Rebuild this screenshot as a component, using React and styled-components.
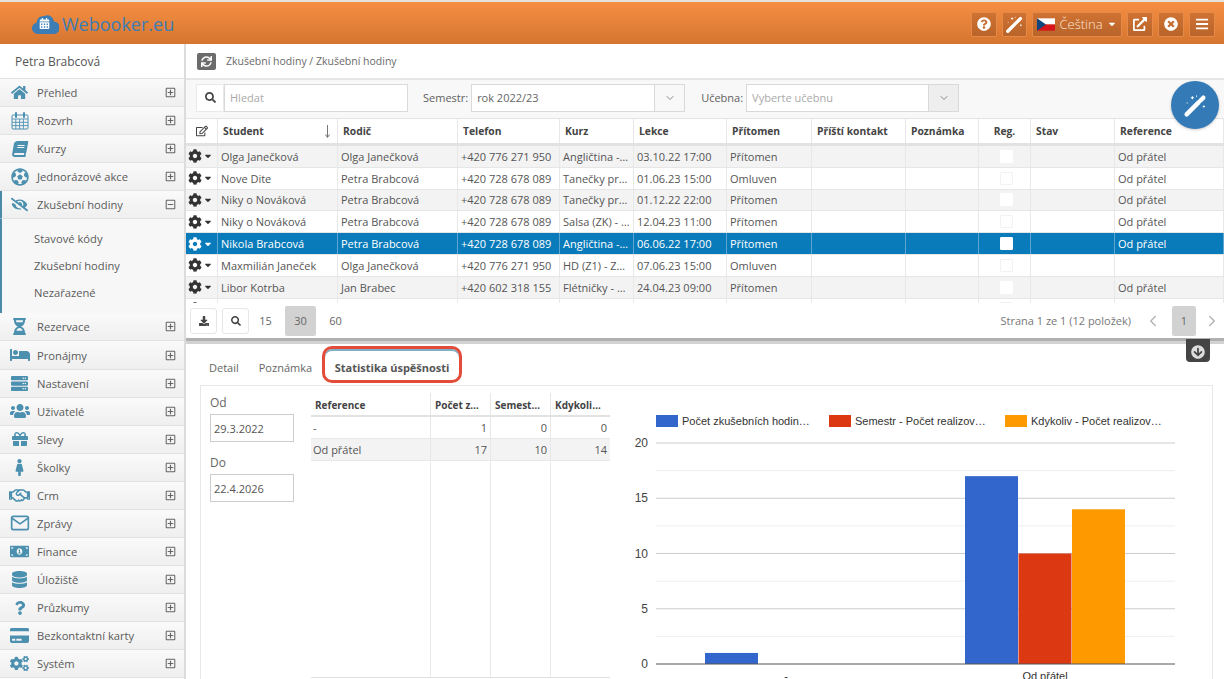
import styled, { createGlobalStyle } from "styled-components";
import {
  FaHome,
  FaBook,
  FaFutbol,
  FaEyeSlash,
  FaHourglassHalf,
  FaBed,
  FaServer,
  FaUsers,
  FaGift,
  FaFemale,
  FaRegHandshake,
  FaMoneyBillAlt,
  FaDatabase,
  FaQuestion,
  FaCreditCard,
  FaCogs,
  FaRegPlusSquare,
  FaRegMinusSquare,
  FaSearch,
  FaCog,
  FaCaretDown,
  FaQuestionCircle,
  FaExternalLinkAlt,
  FaTimesCircle,
  FaBars,
  FaSync,
  FaRegEdit,
  FaDownload,
  FaArrowCircleDown,
  FaCalendarAlt,
} from "react-icons/fa";
import { FiChevronDown, FiChevronLeft, FiChevronRight, FiMail } from "react-icons/fi";

const GlobalStyle = createGlobalStyle`
  html, body { margin: 0; padding: 0; background: #fff; }
  body { font-family: "Open Sans", "Liberation Sans", sans-serif; font-size: 11px; color: #555; }
  * { box-sizing: border-box; }
`;

const Page = styled.div`
  position: relative;
  width: 1224px;
  height: 679px;
  overflow: hidden;
`;

const TopBar = styled.header`
  height: 44px;
  display: flex;
  align-items: center;
  justify-content: space-between;
  padding: 2px 9px 0 32px;
  border-top: 2px solid #e6e2de;
  background: linear-gradient(#f68e44, #d5752f);
`;

const Logo = styled.div`
  position: relative;
  display: flex;
  align-items: center;
  gap: 3px;
  color: #3c7db5;
  font-size: 18px;
`;

const LogoCal = styled.span`
  position: absolute;
  left: 7px;
  top: 6px;
  display: flex;
  color: #fff;
  svg { font-size: 11px; }
`;

const TopActions = styled.div`
  display: flex;
  gap: 5px;
`;

const TopButton = styled.button`
  height: 25px;
  width: ${(props) => props.$width || 26}px;
  display: flex;
  align-items: center;
  justify-content: center;
  padding: 0;
  border: 1px solid #e58a47;
  border-radius: 2px;
  background: linear-gradient(#cf7232, #b9642a);
  color: #fff;
  font: inherit;
  font-size: 13px;
  svg { font-size: 14px; }
`;

const LangText = styled.span`
  margin: 0 4px 0 4px;
  font-weight: 300;
  color: #fbe6d8;
`;

const Caret = styled(FaCaretDown)`
  && { font-size: 10px; }
`;

const Body = styled.div`
  display: flex;
  height: 635px;
`;

const Sidebar = styled.aside`
  width: 186px;
  flex: none;
  border-right: 2px solid #dcdcdc;
`;

const UserName = styled.div`
  height: 35px;
  display: flex;
  align-items: center;
  padding-left: 15px;
  font-size: 12px;
  color: #555;
  background: #fff;
  border-bottom: 1px solid #e2e2e2;
`;

const MenuItem = styled.div`
  height: 28.08px;
  display: flex;
  align-items: center;
  font-size: 11.2px;
  color: #5b5b5b;
  background: linear-gradient(#fafafa, #efefef);
  border-bottom: 1px solid #e2e2e2;
  border-left: 2px solid ${(props) => (props.$active ? "#4b8ba8" : "transparent")};
  padding-left: ${(props) => (props.$active ? 0 : 2)}px;
  margin-left: ${(props) => (props.$active ? 0 : -2)}px;
`;

const MenuIcon = styled.span`
  width: 35px;
  flex: none;
  display: flex;
  justify-content: center;
  color: #4c90b0;
  font-size: ${(props) => props.$size || 17}px;
`;

const TiltedBook = styled(FaBook)`
  transform: skewX(-10deg);
`;

const MenuLabel = styled.span`
  flex: 1;
`;

const MenuToggle = styled.span`
  display: flex;
  margin-right: 8px;
  font-size: 11px;
  color: #666;
`;

const SubMenu = styled.div`
  height: 94px;
  padding: 6px 0 0 32px;
  background: #f7f7f7;
  border-left: 2px solid #4b8ba8;
  font-size: 11.2px;
  color: #5b5b5b;
`;

const SubItem = styled.div`
  height: 27px;
  line-height: 27px;
`;

const Main = styled.main`
  flex: 1;
  min-width: 0;
`;

const Crumbs = styled.div`
  height: 36px;
  display: flex;
  align-items: center;
  gap: 10px;
  padding-left: 11px;
  background: #fff;
  border-bottom: 2px solid #e5e5e5;
  color: #6a6a6a;
  font-size: 10.5px;
`;

const RefreshBox = styled.span`
  width: 19px;
  height: 17px;
  display: flex;
  align-items: center;
  justify-content: center;
  border-radius: 2px;
  background: #6b6b6b;
  color: #fff;
  font-size: 11px;
`;

const Filters = styled.div`
  height: 39px;
  display: flex;
  align-items: center;
  padding: 0 0 3px 10px;
  background: #f8f8f8;
  border-bottom: 1px solid #e4e4e4;
`;

const SearchButton = styled.span`
  width: 28px;
  height: 28px;
  display: flex;
  align-items: center;
  justify-content: center;
  background: #fff;
  border: 1px solid #eaeaea;
  color: #444;
  font-size: 11px;
`;

const Field = styled.div`
  width: ${(props) => props.$width}px;
  height: 28px;
  display: flex;
  align-items: center;
  padding-left: ${(props) => props.$pad || 5}px;
  background: #fff;
  border: 1px solid #d9d9d9;
  font-size: 11px;
  color: ${(props) => (props.$muted ? "#aaa" : "#666")};
`;

const FieldText = styled.span`
  flex: 1;
`;

const FieldArrow = styled.span`
  width: 30px;
  height: 100%;
  display: flex;
  align-items: center;
  justify-content: center;
  border-left: 1px solid #d9d9d9;
  background: ${(props) => (props.$disabled ? "#eee" : "#f8f8f8")};
  color: #888;
  font-size: 12px;
`;

const FilterLabel = styled.span`
  margin: 0 3px 0 ${(props) => props.$left}px;
  font-size: 11px;
  color: #5f5f5f;
`;

const columns = "32px 120px 120px 102px 74px 93px 85px 94px 73px 52px 84px 109px";

const Table = styled.div`
  height: 184px;
  overflow: hidden;
  background: #fff;
`;

const HeadRow = styled.div`
  display: grid;
  grid-template-columns: ${columns};
  height: 27px;
  border-bottom: 3px solid #e2e2e2;
`;

const HeadCell = styled.div`
  display: flex;
  align-items: center;
  justify-content: ${(props) => (props.$center ? "center" : "space-between")};
  padding: 0 5px;
  border-right: 1px solid #e8e8e8;
  font-size: 10.3px;
  font-weight: 700;
  color: #444;
`;

const SortArrow = styled.svg`
  margin-right: 1px;
`;

const Row = styled.div`
  display: grid;
  grid-template-columns: ${columns};
  height: 21.8px;
  font-size: 11px;
  border-bottom: 1px solid #e6e6e6;
  color: ${(props) => (props.$selected ? "#fff" : "#555")};
  background: ${(props) =>
    props.$selected ? "#0a7bba" : props.$odd ? "#f3f3f3" : "#fff"};
`;

const Cell = styled.div`
  display: flex;
  align-items: center;
  justify-content: ${(props) => (props.$center ? "center" : "flex-start")};
  padding-left: 3px;
  white-space: nowrap;
  overflow: hidden;
  border-right: 1px solid ${(props) => (props.$selected ? "#5ea6d0" : "#e8e8e8")};
`;

const GearCell = styled(Cell)`
  padding-left: 2px;
  gap: 1px;
  color: ${(props) => (props.$selected ? "#fff" : "#333")};
  svg:first-child { font-size: 14px; }
  svg:last-child { font-size: 10px; }
`;

const CheckBox = styled.span`
  width: 13px;
  height: 13px;
  background: #fff;
  border-radius: 1px;
  border: 1px solid ${(props) => (props.$odd || props.$selected ? "#fff" : "#f2f2f2")};
`;

const Pager = styled.div`
  height: 35px;
  display: flex;
  align-items: center;
  padding: 0 4px;
  background: #fff;
`;

const PagerButton = styled.span`
  width: 27px;
  height: 26px;
  margin-right: ${(props) => props.$gap}px;
  display: flex;
  align-items: center;
  justify-content: center;
  border: 1px solid #e6e6e6;
  border-radius: 3px;
  color: #444;
  font-size: 10px;
`;

const PageSize = styled.span`
  width: ${(props) => props.$width || 31}px;
  height: 30px;
  display: flex;
  align-items: center;
  justify-content: center;
  margin-right: ${(props) => props.$gap || 0}px;
  border-radius: 2px;
  font-size: 11px;
  color: #666;
  background: ${(props) => (props.$active ? "#d2d2d2" : "transparent")};
`;

const PagerInfo = styled.span`
  margin-left: auto;
  font-size: 11px;
  color: #777;
`;

const PagerArrow = styled.span`
  display: flex;
  margin: ${(props) => props.$margin};
  color: #b5b5b5;
  font-size: 18px;
`;

const Splitter = styled.div`
  position: relative;
  height: 6px;
  background: linear-gradient(#b0b0b0 0 3px, #d2d2d2 3px);
`;

const SplitHandle = styled.span`
  position: absolute;
  left: 1000px;
  top: 1px;
  width: 24px;
  height: 23px;
  display: flex;
  align-items: center;
  justify-content: center;
  padding-top: 3px;
  border-radius: 0 0 4px 4px;
  background: #444;
  color: #ddd;
  font-size: 14px;
  z-index: 2;
`;

const Tabs = styled.div`
  height: 41px;
  display: flex;
  align-items: center;
  padding: 3px 0 0 23px;
`;

const Tab = styled.span`
  margin: 3px ${(props) => props.$gap}px 0 0;
  font-size: 11px;
  color: #666;
`;

const ActiveTab = styled.span`
  height: 37px;
  width: 140px;
  margin-top: -3px;
  padding-top: 6px;
  display: flex;
  align-items: center;
  justify-content: center;
  border: 3px solid #e34c3a;
  border-radius: 10px;
  box-shadow: inset 0 2px 0 #7fb0c8;
  font-size: 11px;
  font-weight: 700;
  color: #555;
`;

const Panel = styled.div`
  display: flex;
  height: 294px;
  margin: 0 11px 0 14px;
  border: 1px solid #e8e8e8;
  border-bottom: none;
`;

const DateColumn = styled.div`
  width: 110px;
  flex: none;
  padding: 7px 0 0 9px;
`;

const DateLabel = styled.div`
  font-size: 12px;
  color: #666;
  height: 21px;
  line-height: 20px;
`;

const DateInput = styled.div`
  width: 84px;
  height: 28px;
  margin-bottom: 11px;
  display: flex;
  align-items: center;
  padding-left: 3px;
  border: 1px solid #ccc;
  font-size: 11px;
  color: #555;
`;

const Stats = styled.div`
  width: 299px;
  flex: none;
  margin-top: 7px;
  height: 285px;
  border-bottom: 1px solid #e0e0e0;
  display: grid;
  grid-template-columns: 120px 60px 60px 59px;
  grid-template-rows: 24px 22px 22px 1fr;
`;

const StatsHead = styled.div`
  display: flex;
  align-items: center;
  padding: 2px 0 0 4px;
  border-bottom: 2px solid #e2e2e2;
  border-right: ${(props) => (props.$last ? "none" : "1px solid #e8e8e8")};
  font-size: 10px;
  font-weight: 700;
  color: #444;
`;

const StatsCell = styled.div`
  display: flex;
  align-items: center;
  justify-content: ${(props) => (props.$num ? "flex-end" : "flex-start")};
  padding: 0 3px 0 2px;
  font-size: 11px;
  color: #555;
  background: ${(props) => (props.$odd ? "#f3f3f3" : "#fff")};
  border-bottom: 1px solid #e8e8e8;
  border-right: ${(props) => (props.$last ? "none" : "1px solid #e8e8e8")};
`;

const StatsFill = styled.div`
  border-right: ${(props) => (props.$last ? "none" : "1px solid #e8e8e8")};
`;

const Chart = styled.svg`
  flex: none;
  margin: 3px 0 0 10px;
  font-family: "Liberation Sans", Arial, sans-serif;
`;

const Fab = styled.span`
  position: absolute;
  left: 1171px;
  top: 81px;
  width: 48px;
  height: 48px;
  display: flex;
  align-items: center;
  justify-content: center;
  border-radius: 50%;
  background: #337ab7;
  color: #fff;
  box-shadow: 0 1px 3px rgba(0, 0, 0, 0.2);
  z-index: 3;
`;

function CalendarIcon() {
  return (
    <svg width="18" height="18" viewBox="0 0 18 18" fill="none" stroke="currentColor">
      <rect x="1" y="3" width="16" height="14" rx="1" />
      <path d="M1 7h16M1 10.3h16M1 13.6h16M4.8 7v10M8.6 7v10M12.4 7v10" strokeWidth="0.9" />
      <path d="M5 1v4M13 1v4" strokeWidth="2" strokeLinecap="round" />
    </svg>
  );
}

function WandIcon({ size }) {
  return (
    <svg width={size} height={size} viewBox="0 0 24 24" fill="none" stroke="currentColor">
      <path d="M3.5 20.5L15 9" strokeWidth="4.2" strokeLinecap="round" />
      <path d="M16.8 7.2l2.7-2.7" strokeWidth="4.2" strokeLinecap="round" />
      <path d="M9 3v3M7.5 4.5h3M20 12v2M19 13h2M13 2.5v1M4 9v1" strokeWidth="1" />
    </svg>
  );
}

const menuTop = [
  [FaHome, "Přehled", 17],
  [CalendarIcon, "Rozvrh", 18],
  [TiltedBook, "Kurzy", 16],
  [FaFutbol, "Jednorázové akce", 18],
];

const menuBottom = [
  [FaHourglassHalf, "Rezervace", 17],
  [FaBed, "Pronájmy", 20],
  [FaServer, "Nastavení", 17],
  [FaUsers, "Uživatelé", 20],
  [FaGift, "Slevy", 16],
  [FaFemale, "Školky", 17],
  [FaRegHandshake, "Crm", 21],
  [FiMail, "Zprávy", 20],
  [FaMoneyBillAlt, "Finance", 19],
  [FaDatabase, "Úložiště", 17],
  [FaQuestion, "Průzkumy", 14],
  [FaCreditCard, "Bezkontaktní karty", 19],
  [FaCogs, "Systém", 19],
];

const rows = [
  ["Olga Janečková", "Olga Janečková", "+420 776 271 950", "Angličtina -…", "03.10.22 17:00", "Přítomen", "Od přátel"],
  ["Nove Dite", "Petra Brabcová", "+420 728 678 089", "Tanečky pr…", "01.06.23 15:00", "Omluven", "Od přátel"],
  ["Niky o Nováková", "Petra Brabcová", "+420 728 678 089", "Tanečky pr…", "01.12.22 22:00", "Přítomen", "Od přátel"],
  ["Niky o Nováková", "Petra Brabcová", "+420 728 678 089", "Salsa (ZK) - …", "12.04.23 11:00", "Přítomen", "Od přátel"],
  ["Nikola Brabcová", "Petra Brabcová", "+420 728 678 089", "Angličtina -…", "06.06.22 17:00", "Přítomen", "Od přátel"],
  ["Maxmilián Janeček", "Olga Janečková", "+420 776 271 950", "HD (Z1) - Z…", "07.06.23 15:00", "Omluven", ""],
  ["Libor Kotrba", "Jan Brabec", "+420 602 318 155", "Flétničky - …", "24.04.23 09:00", "Přítomen", "Od přátel"],
  ["", "", "", "", "", "", ""],
];

const headers = ["Student", "Rodič", "Telefon", "Kurz", "Lekce", "Přítomen", "Příští kontakt", "Poznámka", "Reg.", "Stav", "Reference"];

const stats = [
  ["-", 1, 0, 0],
  ["Od přátel", 17, 10, 14],
];

// chart: origin of the svg is at (620, 389) on the page
const chartY = (value) => 275 - value * 11.05;
const bars = [
  { x: 85, value: 1, color: "#3366cc" },
  { x: 345, value: 17, color: "#3366cc" },
  { x: 398.5, value: 10, color: "#dc3912" },
  { x: 452, value: 14, color: "#ff9900" },
];
const legend = [
  { x: 36, color: "#3366cc", label: "Počet zkušebních hodin…" },
  { x: 209, color: "#dc3912", label: "Semestr - Počet realizov…" },
  { x: 385, color: "#ff9900", label: "Kdykoliv - Počet realizov…" },
];

function MenuRow({ icon: Icon, label, size, open, active }) {
  const Toggle = open ? FaRegMinusSquare : FaRegPlusSquare;
  return (
    <MenuItem $active={active}>
      <MenuIcon $size={size}>
        <Icon />
      </MenuIcon>
      <MenuLabel>{label}</MenuLabel>
      <MenuToggle>
        <Toggle />
      </MenuToggle>
    </MenuItem>
  );
}

function SuccessChart() {
  return (
    <Chart width={575} height={291} viewBox="0 0 575 291">
      {legend.map((item) => (
        <g key={item.label}>
          <rect x={item.x} y={26} width={22} height={12} fill={item.color} />
          <text x={item.x + 26} y={36} fontSize="11" fill="#333">
            {item.label}
          </text>
        </g>
      ))}
      {[2.5, 7.5, 12.5, 17.5].map((value) => (
        <line key={value} x1={36} x2={555} y1={chartY(value)} y2={chartY(value)} stroke="#eee" />
      ))}
      {[5, 10, 15, 20].map((value) => (
        <g key={value}>
          <line x1={36} x2={555} y1={chartY(value)} y2={chartY(value)} stroke="#ccc" />
          <text x={28} y={chartY(value) + 4} fontSize="12" fill="#444" textAnchor="end">
            {value}
          </text>
        </g>
      ))}
      {bars.map((bar) => (
        <rect
          key={bar.x}
          x={bar.x}
          y={chartY(bar.value)}
          width={53}
          height={bar.value * 11.05}
          fill={bar.color}
        />
      ))}
      <line x1={36} x2={555} y1={275} y2={275} stroke="#555" />
      <text x={28} y={279} fontSize="12" fill="#444" textAnchor="end">
        0
      </text>
      <text x={166} y={291} fontSize="11" fill="#333" textAnchor="middle">
        -
      </text>
      <text x={425} y={291} fontSize="11" fill="#333" textAnchor="middle">
        Od přátel
      </text>
    </Chart>
  );
}

export default function App() {
  return (
    <Page>
      <GlobalStyle />
      <TopBar>
        <Logo>
          <svg width="27" height="22" viewBox="0 0 28 23" fill="#3c7db5">
            <path d="M6 22a6 6 0 0 1-1.2-11.9A7 7 0 0 1 13 3.2a6.5 6.5 0 0 1 9.6 5.6A6.6 6.6 0 0 1 22 22z" />
          </svg>
          <LogoCal>
            <FaCalendarAlt />
          </LogoCal>
          Webooker.eu
        </Logo>
        <TopActions>
          <TopButton>
            <FaQuestionCircle />
          </TopButton>
          <TopButton $width={25}>
            <WandIcon size={19} />
          </TopButton>
          <TopButton $width={90}>
            <svg width="18" height="13" viewBox="0 0 19 13">
              <rect width="19" height="6.5" fill="#fff" />
              <rect y="6.5" width="19" height="6.5" fill="#d7141a" />
              <path d="M0 0l9.5 6.5L0 13z" fill="#11457e" />
            </svg>
            <LangText>Čeština</LangText>
            <Caret />
          </TopButton>
          <TopButton>
            <FaExternalLinkAlt />
          </TopButton>
          <TopButton>
            <FaTimesCircle />
          </TopButton>
          <TopButton>
            <FaBars />
          </TopButton>
        </TopActions>
      </TopBar>
      <Body>
        <Sidebar>
          <UserName>Petra Brabcová</UserName>
          {menuTop.map(([icon, label, size]) => (
            <MenuRow key={label} icon={icon} label={label} size={size} />
          ))}
          <MenuRow icon={FaEyeSlash} label="Zkušební hodiny" size={17} open active />
          <SubMenu>
            <SubItem>Stavové kódy</SubItem>
            <SubItem>Zkušební hodiny</SubItem>
            <SubItem>Nezařazené</SubItem>
          </SubMenu>
          {menuBottom.map(([icon, label, size]) => (
            <MenuRow key={label} icon={icon} label={label} size={size} />
          ))}
        </Sidebar>
        <Main>
          <Crumbs>
            <RefreshBox>
              <FaSync />
            </RefreshBox>
            Zkušební hodiny / Zkušební hodiny
          </Crumbs>
          <Filters>
            <SearchButton>
              <FaSearch />
            </SearchButton>
            <Field $width={184} $muted>
              Hledat
            </Field>
            <FilterLabel $left={15}>Semestr:</FilterLabel>
            <Field $width={214}>
              <FieldText>rok 2022/23</FieldText>
              <FieldArrow>
                <FiChevronDown />
              </FieldArrow>
            </Field>
            <FilterLabel $left={16}>Učebna:</FilterLabel>
            <Field $width={213} $muted>
              <FieldText>Vyberte učebnu</FieldText>
              <FieldArrow $disabled>
                <FiChevronDown />
              </FieldArrow>
            </Field>
          </Filters>
          <Table>
            <HeadRow>
              <HeadCell $center>
                <FaRegEdit size={12} />
              </HeadCell>
              {headers.map((header, idx) => (
                <HeadCell key={header} $center={header === "Reg."}>
                  {header}
                  {idx === 0 && (
                    <SortArrow width="7" height="13" viewBox="0 0 7 13" fill="none" stroke="#777">
                      <path d="M3.5 0v12M1.5 9.5l2 3 2-3" />
                    </SortArrow>
                  )}
                </HeadCell>
              ))}
            </HeadRow>
            {rows.map((row, idx) => {
              const selected = idx === 4;
              const odd = idx % 2 === 0;
              return (
                <Row key={idx} $selected={selected} $odd={odd}>
                  <GearCell $selected={selected}>
                    <FaCog />
                    <FaCaretDown />
                  </GearCell>
                  {row.slice(0, 6).map((value, col) => (
                    <Cell key={col} $selected={selected}>
                      {value}
                    </Cell>
                  ))}
                  <Cell $selected={selected} />
                  <Cell $selected={selected} />
                  <Cell $selected={selected} $center>
                    <CheckBox $odd={odd} $selected={selected} />
                  </Cell>
                  <Cell $selected={selected} />
                  <Cell $selected={selected}>{row[6]}</Cell>
                </Row>
              );
            })}
          </Table>
          <Pager>
            <PagerButton $gap={5}>
              <FaDownload />
            </PagerButton>
            <PagerButton $gap={1}>
              <FaSearch />
            </PagerButton>
            <PageSize $gap={4}>15</PageSize>
            <PageSize $active $gap={4}>
              30
            </PageSize>
            <PageSize>60</PageSize>
            <PagerInfo>Strana 1 ze 1 (12 položek)</PagerInfo>
            <PagerArrow $margin="0 10px 0 13px">
              <FiChevronLeft />
            </PagerArrow>
            <PageSize $active $width={24}>
              1
            </PageSize>
            <PagerArrow $margin="0 -1px 0 7px">
              <FiChevronRight />
            </PagerArrow>
          </Pager>
          <Splitter>
            <SplitHandle>
              <FaArrowCircleDown />
            </SplitHandle>
          </Splitter>
          <Tabs>
            <Tab $gap={20}>Detail</Tab>
            <Tab $gap={10}>Poznámka</Tab>
            <ActiveTab>Statistika úspěšnosti</ActiveTab>
          </Tabs>
          <Panel>
            <DateColumn>
              <DateLabel>Od</DateLabel>
              <DateInput>29.3.2022</DateInput>
              <DateLabel>Do</DateLabel>
              <DateInput>22.4.2026</DateInput>
            </DateColumn>
            <Stats>
              <StatsHead>Reference</StatsHead>
              <StatsHead>Počet z…</StatsHead>
              <StatsHead>Semest…</StatsHead>
              <StatsHead $last>Kdykoli…</StatsHead>
              {stats.map((row, idx) =>
                row.map((value, col) => (
                  <StatsCell key={`${idx}-${col}`} $num={col > 0} $odd={idx === 1} $last={col === 3}>
                    {value}
                  </StatsCell>
                ))
              )}
              <StatsFill />
              <StatsFill />
              <StatsFill />
              <StatsFill $last />
            </Stats>
            <SuccessChart />
          </Panel>
        </Main>
      </Body>
      <Fab>
        <WandIcon size={25} />
      </Fab>
    </Page>
  );
}
